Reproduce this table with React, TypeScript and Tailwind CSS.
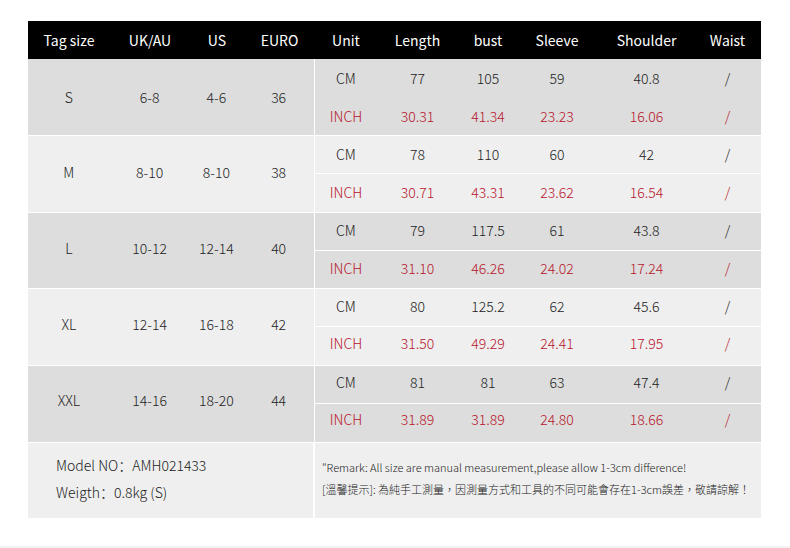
import React from "react";

const rows = [
  { tag: "S", uk: "6-8", us: "4-6", euro: "36", cm: ["77", "105", "59", "40.8", "/"], inch: ["30.31", "41.34", "23.23", "16.06", "/"], dark: true, sep: false, h: "h-[77px]", pl: "", pc: "", pi: "" },
  { tag: "M", uk: "8-10", us: "8-10", euro: "38", cm: ["78", "110", "60", "42", "/"], inch: ["30.71", "43.31", "23.62", "16.54", "/"], dark: false, sep: true, h: "h-[77px]", pl: "pb-[4px]", pc: "", pi: "pb-[2px]" },
  { tag: "L", uk: "10-12", us: "12-14", euro: "40", cm: ["79", "117.5", "61", "43.8", "/"], inch: ["31.10", "46.26", "24.02", "17.24", "/"], dark: true, sep: true, h: "h-[76px]", pl: "pb-[4px]", pc: "pb-[2px]", pi: "pb-[2px]" },
  { tag: "XL", uk: "12-14", us: "16-18", euro: "42", cm: ["80", "125.2", "62", "45.6", "/"], inch: ["31.50", "49.29", "24.41", "17.95", "/"], dark: false, sep: true, h: "h-[77px]", pl: "pb-[6px]", pc: "pb-[2px]", pi: "pb-[6px]" },
  { tag: "XXL", uk: "14-16", us: "18-20", euro: "44", cm: ["81", "81", "63", "47.4", "/"], inch: ["31.89", "31.89", "24.80", "18.66", "/"], dark: true, sep: true, h: "h-[77px]", pl: "pb-[8px]", pc: "pb-[4px]", pi: "pb-[8px]" },
];

const leftW = ["w-[82px]", "w-[80px]", "w-[54px]", "w-[71px]"];
const rightW = ["w-[64px] pr-[2px]", "w-[77px]", "w-[64px]", "w-[74px]", "w-[105px]", "w-[62px] pr-[5px]"];

export default function App() {
  return (
    <div
      className="w-[790px] h-[548px] bg-white relative overflow-hidden"
      style={{ fontFamily: '"Noto Sans CJK SC", "Noto Sans", sans-serif' }}
    >
      <div className="pt-[21px] pl-[28px]">
        <div className="w-[733px] flex flex-col">
          {/* header */}
          <div className="flex h-[38px] bg-black text-white text-[14px] items-center">
            {["Tag size", "UK/AU", "US", "EURO"].map((h, i) => (
              <div key={h} className={`${leftW[i]} text-center`}>{h}</div>
            ))}
            {["Unit", "Length", "bust", "Sleeve", "Shoulder", "Waist"].map((h, i) => (
              <div key={h} className={`${rightW[i]} text-center`}>{h}</div>
            ))}
          </div>
          {rows.map((r) => (
            <div
              key={r.tag}
              className={`flex ${r.h} border-b border-white ${r.dark ? "bg-[#dcdddc]" : "bg-[#efefef]"} text-[14px] text-[#222] font-light`}
            >
              <div className={`flex items-center w-[287px] border-r border-white ${r.pl}`}>
                <div className={`${leftW[0]} text-center`}>{r.tag}</div>
                <div className={`${leftW[1]} text-center`}>{r.uk}</div>
                <div className={`${leftW[2]} text-center`}>{r.us}</div>
                <div className={`${leftW[3]} text-center`}>{r.euro}</div>
              </div>
              <div className="flex flex-col flex-1">
                <div className={`flex items-center h-[38px] ${r.sep ? "border-b border-white" : ""} ${r.pc}`}>
                  <div className={`${rightW[0]} text-center`}>CM</div>
                  {r.cm.map((v, i) => (
                    <div key={i} className={`${rightW[i + 1]} text-center`}>{v}</div>
                  ))}
                </div>
                <div className={`flex items-center flex-1 text-[#b8142b] ${r.pi}`}>
                  <div className={`${rightW[0]} text-center`}>INCH</div>
                  {r.inch.map((v, i) => (
                    <div key={i} className={`${rightW[i + 1]} text-center`}>{v}</div>
                  ))}
                </div>
              </div>
            </div>
          ))}
          {/* footer */}
          <div className="flex h-[75px] bg-[#efefef] text-[#222] font-light">
            <div className="w-[287px] border-r-2 border-white flex flex-col justify-center pl-[28px] pb-[4px] gap-[7px] text-[14px] leading-[20px]">
              <div>Model NO：AMH021433</div>
              <div>Weigth：0.8kg (S)</div>
            </div>
            <div className="flex-1 flex flex-col justify-center pl-[7px] pb-[5px] gap-[6px] text-[11px] leading-[16px]">
              <div>"Remark: All size are manual measurement,please allow 1-3cm difference!</div>
              <div style={{ fontFamily: '"Noto Sans CJK TC", "Noto Sans", sans-serif' }}>[溫馨提示]: 為純手工測量，因測量方式和工具的不同可能會存在1-3cm誤差，敬請諒解！</div>
            </div>
          </div>
        </div>
      </div>
      <div className="absolute left-0 right-0 bottom-0 h-[2px] bg-[#f2f2f2]" />
    </div>
  );
}
